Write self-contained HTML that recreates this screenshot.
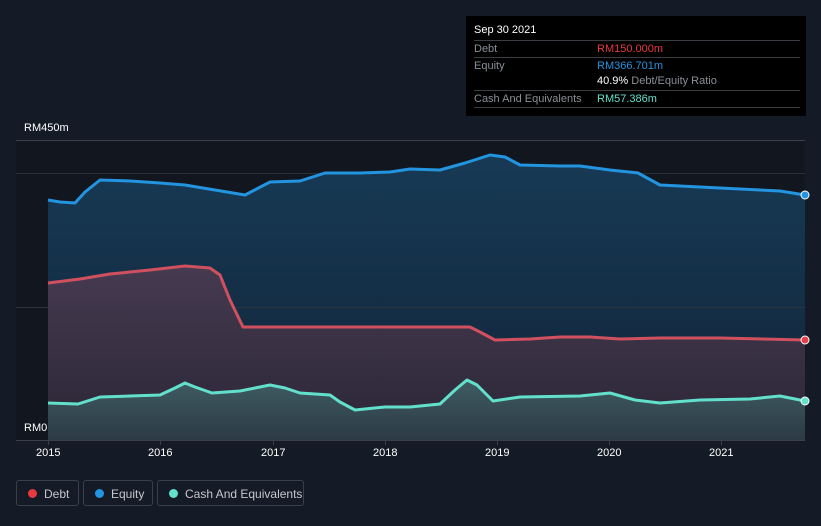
<!DOCTYPE html>
<html><head><meta charset="utf-8"><style>
html,body{margin:0;padding:0;background:#151b26;width:821px;height:526px;overflow:hidden;font-family:"Liberation Sans",Arial,sans-serif;}
.tip{position:absolute;left:466px;top:16px;width:340px;height:100px;background:#000;}
.tip .r{position:absolute;left:8px;width:326px;font-size:11px;color:#8a8f96;}
.leg{position:absolute;top:480px;height:26px;border:1px solid #3a404a;border-radius:3px;color:#c4c7cc;font-size:12px;line-height:26px;box-sizing:border-box;}
.leg i{position:absolute;left:11px;top:8px;width:9px;height:9px;border-radius:50%;}
.leg span{position:absolute;left:27px;}
.ax{position:absolute;color:#fff;font-size:11px;}
</style></head><body>
<svg width="821" height="526" style="position:absolute;left:0;top:0">
<defs>
<linearGradient id="ge" x1="0" y1="0" x2="0" y2="1"><stop offset="0" stop-color="#173a55"/><stop offset="1" stop-color="#112438"/></linearGradient>
<linearGradient id="gd" x1="0" y1="0" x2="0" y2="1"><stop offset="0" stop-color="#463a50"/><stop offset="1" stop-color="#2a2636"/></linearGradient>
<linearGradient id="gc" x1="0" y1="0" x2="0" y2="1"><stop offset="0" stop-color="#3f5c62"/><stop offset="1" stop-color="#2c3a45"/></linearGradient>
</defs>
<rect x="16" y="140" width="789" height="300" fill="#12161e"/>
<line x1="16" y1="140.5" x2="805" y2="140.5" stroke="#3a3f48"/>
<line x1="16" y1="173.5" x2="805" y2="173.5" stroke="#2a2f38"/>
<polygon fill="url(#ge)" points="48,200 60,202 75,203 85,192 100,180 130,181 160,183 185,185 215,190 245,195 270,182 300,181 325,173 360,173 390,172 410,169 440,170 465,163 490,155 505,157 520,165 560,166 580,166 610,170 638,173 660,185 700,187 740,189 780,191 805,195 805,440 48,440"/>
<line x1="16" y1="307.5" x2="805" y2="307.5" stroke="#2c3340"/>
<polygon fill="url(#gd)" points="48,283 80,279 110,274 150,270 185,266 210,268 220,275 230,300 243,327 260,327 300,327 380,327 470,327 480,332 495,340 530,339 560,337 590,337 620,339 660,338 720,338 805,340 805,440 48,440"/>
<polygon fill="url(#gc)" points="48,403 78,404 100,397 130,396 160,395 175,388 185,383 195,387 212,393 240,391 270,385 285,388 300,393 330,395 340,402 355,410 385,407 410,407 440,404 455,390 467,380 477,385 493,401 520,397 580,396 610,393 635,400 660,403 700,400 750,399 780,396 805,401 805,440 48,440"/>
<g fill="none" stroke-width="3" stroke-linejoin="round">
<polyline stroke="#2394e0" points="48,200 60,202 75,203 85,192 100,180 130,181 160,183 185,185 215,190 245,195 270,182 300,181 325,173 360,173 390,172 410,169 440,170 465,163 490,155 505,157 520,165 560,166 580,166 610,170 638,173 660,185 700,187 740,189 780,191 805,195"/>
<polyline stroke="#d0505f" points="48,283 80,279 110,274 150,270 185,266 210,268 220,275 230,300 243,327 260,327 300,327 380,327 470,327 480,332 495,340 530,339 560,337 590,337 620,339 660,338 720,338 805,340"/>
<polyline stroke="#62e0cc" points="48,403 78,404 100,397 130,396 160,395 175,388 185,383 195,387 212,393 240,391 270,385 285,388 300,393 330,395 340,402 355,410 385,407 410,407 440,404 455,390 467,380 477,385 493,401 520,397 580,396 610,393 635,400 660,403 700,400 750,399 780,396 805,401"/>
</g>
<circle cx="805" cy="195" r="4" fill="#2394e0" stroke="#fff" stroke-width="1"/>
<circle cx="805" cy="340" r="4" fill="#e0404a" stroke="#fff" stroke-width="1"/>
<circle cx="805" cy="401" r="4" fill="#62e0cc" stroke="#fff" stroke-width="1"/>
<line x1="16" y1="440.5" x2="805" y2="440.5" stroke="#3a3f48"/>
<g stroke="#3a3f48"><line x1="48.5" y1="440" x2="48.5" y2="445"/><line x1="160.5" y1="440" x2="160.5" y2="445"/><line x1="273.5" y1="440" x2="273.5" y2="445"/><line x1="385.5" y1="440" x2="385.5" y2="445"/><line x1="497.5" y1="440" x2="497.5" y2="445"/><line x1="609.5" y1="440" x2="609.5" y2="445"/><line x1="721.5" y1="440" x2="721.5" y2="445"/></g>
</svg>
<div class="ax" style="left:24px;top:122px">RM450m</div>
<div class="ax" style="left:24px;top:422px">RM0</div>
<div class="ax" style="left:36px;top:447px">2015</div>
<div class="ax" style="left:148px;top:447px">2016</div>
<div class="ax" style="left:261px;top:447px">2017</div>
<div class="ax" style="left:373px;top:447px">2018</div>
<div class="ax" style="left:485px;top:447px">2019</div>
<div class="ax" style="left:597px;top:447px">2020</div>
<div class="ax" style="left:709px;top:447px">2021</div>
<div class="tip">
<div class="r" style="top:8px;color:#fff">Sep 30 2021</div>
<div class="r" style="top:24px;height:16px;border-top:1px solid #3a3d42;line-height:16px">Debt<b style="position:absolute;left:123px;color:#e8393f;font-weight:normal">RM150.000m</b></div>
<div class="r" style="top:41px;height:16px;border-top:1px solid #3a3d42;line-height:16px">Equity<b style="position:absolute;left:123px;color:#2394e0;font-weight:normal">RM366.701m</b></div>
<div class="r" style="top:57px;height:16px;line-height:16px"><span style="position:absolute;left:123px"><b style="color:#fff;font-weight:normal">40.9%</b> Debt/Equity Ratio</span></div>
<div class="r" style="top:74px;height:16px;border-top:1px solid #3a3d42;border-bottom:1px solid #3a3d42;line-height:16px">Cash And Equivalents<b style="position:absolute;left:123px;color:#62e0cc;font-weight:normal">RM57.386m</b></div>
</div>
<div class="leg" style="left:16px;width:63px"><i style="background:#e8393f"></i><span>Debt</span></div>
<div class="leg" style="left:83px;width:70px"><i style="background:#2394e0"></i><span>Equity</span></div>
<div class="leg" style="left:157px;width:147px"><i style="background:#62e0cc"></i><span>Cash And Equivalents</span></div>
</body></html>
